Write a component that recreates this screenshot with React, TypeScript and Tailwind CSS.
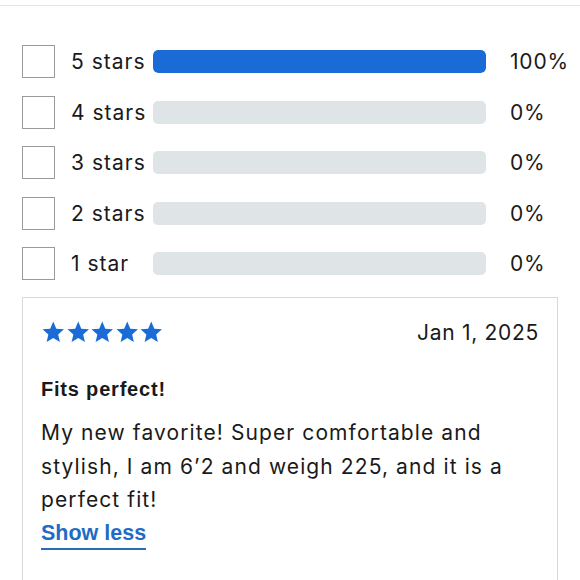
import React from 'react';

const rows = [
  { label: '5 stars', pct: 100 },
  { label: '4 stars', pct: 0 },
  { label: '3 stars', pct: 0 },
  { label: '2 stars', pct: 0 },
  { label: '1 star', pct: 0 },
];

const Star = () => (
  <svg width="24.5" height="24" viewBox="0 0 24 24" className="text-[#1b6bd6]">
    <path
      fill="currentColor"
      d="M12 1.6l3.05 7.05 7.65.7-5.8 5.05 1.75 7.5L12 17.95 5.35 21.9l1.75-7.5L1.3 9.35l7.65-.7z"
    />
  </svg>
);

const App: React.FC = () => {
  return (
    <div
      className="w-[580px] h-[580px] overflow-hidden bg-white text-[#1a1a1a]"
      style={{ fontFamily: 'Inter, "Liberation Sans", sans-serif' }}
    >
      <div className="h-[6px] border-b border-[#e3e5e8]" />

      <div className="px-[22px] pt-[39px] flex flex-col gap-[17.5px]">
        {rows.map((r) => (
          <div key={r.label} className="flex items-center h-[33px]">
            <div className="w-[33px] h-[33px] border-[1.5px] border-[#9a9a9a] bg-white shrink-0" />
            <span className="ml-[16px] w-[82px] shrink-0 text-[21px] leading-none tracking-[1px]">{r.label}</span>
            <div className="w-[333px] shrink-0 h-[23px] rounded-[5px] bg-[#dfe4e7] overflow-hidden">
              {r.pct > 0 && (
                <div className="h-full bg-[#1b6bd6] rounded-[5px]" style={{ width: `${r.pct}%` }} />
              )}
            </div>
            <span className="ml-[24px] shrink-0 text-[21px] leading-none tracking-[0.8px]">{r.pct}%</span>
          </div>
        ))}
      </div>

      <div className="mx-[22px] mt-[17px] border-[1.5px] border-[#d6d8da] px-[18px] pt-[22px] pb-[40px]">
        <div className="flex items-center justify-between">
          <div className="flex">
            <Star />
            <Star />
            <Star />
            <Star />
            <Star />
          </div>
          <span className="text-[21px] leading-none tracking-[0.7px]">Jan 1, 2025</span>
        </div>

        <h3
          className="mt-[35px] text-[20px] font-bold leading-none tracking-[0.8px]"
          style={{ fontFamily: '"Liberation Sans", Arial, sans-serif' }}
        >
          Fits perfect!
        </h3>

        <p className="mt-[17px] text-[21px] leading-[33.5px] tracking-[1.1px]">
          My new favorite! Super comfortable and stylish, I am 6’2 and weigh 225, and it is a perfect fit!
        </p>

        <a
          href="#"
          className="inline-block mt-[2px] text-[21.5px] font-bold text-[#1f6cc4] leading-[29px] border-b-2 border-[#2b6cb8]"
          style={{ fontFamily: '"Liberation Sans", Arial, sans-serif' }}
        >
          Show less
        </a>
      </div>
    </div>
  );
};

export default App;
